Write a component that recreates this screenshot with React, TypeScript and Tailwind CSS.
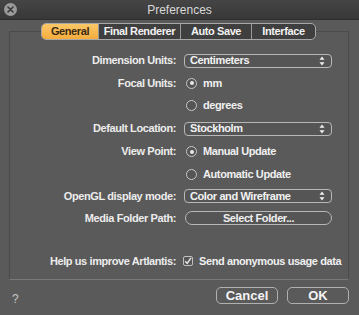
import React from "react";

const font = { fontFamily: '"Liberation Sans", Arial, sans-serif' };

function Updown() {
  return (
    <svg width="6" height="10" viewBox="0 0 6 10" className="shrink-0">
      <path d="M3 0.5 L5.5 3.8 L0.5 3.8 Z" fill="#f0f0f0" />
      <path d="M3 9.5 L5.5 6.2 L0.5 6.2 Z" fill="#f0f0f0" />
    </svg>
  );
}

function Select({ label }: { label: string }) {
  return (
    <div className="w-[148px] h-[14px] rounded-[4px] border border-[#b8b8b8] bg-[#555555] flex items-center justify-between pl-[5px] pr-[6px]">
      <span className="text-[11px] font-bold tracking-[-0.4px] text-[#f2f2f2] leading-none whitespace-nowrap">{label}</span>
      <Updown />
    </div>
  );
}

function Radio({ label, on }: { label: string; on?: boolean }) {
  return (
    <div className="flex items-center gap-[6px] pl-[2px]">
      <div className="w-[11px] h-[11px] rounded-full border border-[#c8c8c8] bg-[#555] flex items-center justify-center">
        {on && <div className="w-[4px] h-[4px] rounded-full bg-[#e8e8e8]" />}
      </div>
      <span className="text-[11px] font-bold tracking-[-0.4px] text-[#f0f0f0] leading-none whitespace-nowrap">{label}</span>
    </div>
  );
}

function Row({ h, label, children }: { h: string; label?: string; children: React.ReactNode }) {
  return (
    <div className={`flex items-center ${h}`}>
      <div className="w-[166px] text-right text-[11px] font-bold tracking-[-0.4px] text-[#ececec] leading-none whitespace-nowrap">{label}</div>
      <div className="ml-[8px] flex items-center">{children}</div>
    </div>
  );
}

export default function App() {
  const tabs = [
    { t: "General", w: "w-[56px]", on: true },
    { t: "Final Renderer", w: "w-[82px]" },
    { t: "Auto Save", w: "w-[71px]" },
    { t: "Interface", w: "w-[64px]" },
  ];
  return (
    <div className="w-[359px] h-[315px] bg-[#5a5a5a] flex flex-col overflow-hidden" style={font}>
      <div className="h-[20px] bg-gradient-to-b from-[#454545] to-[#383838] border-b border-[#2e2e2e] flex items-center">
        <div className="w-[20px] flex justify-center">
          <div className="w-[13px] h-[13px] rounded-full bg-[#9a9a9a] flex items-center justify-center">
            <svg width="7" height="7" viewBox="0 0 7 7">
              <path d="M1 1 L6 6 M6 1 L1 6" stroke="#3a3a3a" strokeWidth="1.6" strokeLinecap="round" />
            </svg>
          </div>
        </div>
        <div className="flex-1 text-center text-[12px] text-[#d8d8d8] leading-none">Preferences</div>
        <div className="w-[20px]" />
      </div>

      <div className="flex justify-center mt-[3px] relative z-10 pr-[1px]">
        <div className="flex h-[17px] rounded-[5px] border border-[#a8a8a8] overflow-hidden bg-[#3f3f3f] ml-[-1px]">
          {tabs.map((tab, i) => (
            <div
              key={tab.t}
              className={`${tab.w} flex items-center justify-center text-[11px] font-bold tracking-[-0.4px] whitespace-nowrap leading-none ${
                i > 0 ? "border-l border-[#9a9a9a]" : ""
              } ${tab.on ? "bg-gradient-to-b from-[#fcc868] to-[#f4ac3c] text-[#3a2a10]" : "text-[#f2f2f2]"}`}
            >
              {tab.t}
            </div>
          ))}
        </div>
      </div>

      <div className="mt-[-9px] ml-[9px] w-[340px] h-[249px] border border-[#4b4b4b] border-b-[#787878] flex flex-col pt-[17px]">
        <Row h="h-[23px]" label="Dimension Units:">
          <Select label="Centimeters" />
        </Row>
        <Row h="h-[22px]" label="Focal Units:">
          <Radio label="mm" on />
        </Row>
        <Row h="h-[23px]">
          <Radio label="degrees" />
        </Row>
        <Row h="h-[23px]" label="Default Location:">
          <Select label="Stockholm" />
        </Row>
        <Row h="h-[23px]" label="View Point:">
          <Radio label="Manual Update" on />
        </Row>
        <Row h="h-[22px]">
          <Radio label="Automatic Update" />
        </Row>
        <Row h="h-[22px]" label="OpenGL display mode:">
          <Select label="Color and Wireframe" />
        </Row>
        <Row h="h-[22px]" label="Media Folder Path:">
          <div className="w-[147px] h-[14px] ml-[1px] rounded-full border border-[#b8b8b8] bg-[#555] flex items-center justify-center text-[11px] font-bold tracking-[-0.4px] text-[#f0f0f0] leading-none">
            Select Folder...
          </div>
        </Row>
        <div className="h-[21px]" />
        <Row h="h-[22px]" label="Help us improve Artlantis:">
          <div className="flex items-center gap-[6px] ml-[-1px]">
            <div className="w-[10px] h-[10px] rounded-[2px] border border-[#c0c0c0] bg-[#555] flex items-center justify-center">
              <svg width="8" height="8" viewBox="0 0 8 8">
                <path d="M1.2 4.2 L3.2 6.4 L7 0.8" stroke="#eaeaea" strokeWidth="1.4" fill="none" />
              </svg>
            </div>
            <span className="text-[11px] font-bold tracking-[-0.4px] text-[#f0f0f0] leading-none whitespace-nowrap">Send anonymous usage data</span>
          </div>
        </Row>
      </div>

      <div className="flex items-start mt-[7px] pl-[12px] pr-[10px]">
        <div className="text-[12px] text-[#c8c8c8] mt-[3px]">?</div>
        <div className="flex-1" />
        <div className="w-[62px] h-[17px] rounded-[5px] border border-[#b0b0b0] flex items-center justify-center text-[13px] font-bold text-[#f4f4f4] leading-none">
          Cancel
        </div>
        <div className="w-[62px] h-[17px] ml-[9px] rounded-[5px] border border-[#b0b0b0] flex items-center justify-center text-[13px] font-bold text-[#f4f4f4] leading-none">
          OK
        </div>
      </div>
    </div>
  );
}
